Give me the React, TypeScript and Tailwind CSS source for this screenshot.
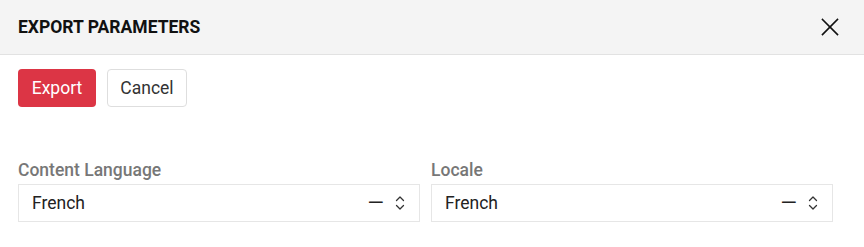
import React from 'react';

// Export parameters dialog: header, action buttons and two select fields

function UpDownIcon() {
  return (
    <svg width="10" height="16" viewBox="0 0 10 16" fill="none" stroke="#333" strokeWidth="1.3" strokeLinecap="round" strokeLinejoin="round">
      <path d="M1.5 5.5 L5 2 L8.5 5.5" />
      <path d="M1.5 10.5 L5 14 L8.5 10.5" />
    </svg>
  );
}

function SelectField({ label, value }: { label: string; value: string }) {
  return (
    <div className="flex flex-col">
      <label className="text-[17.5px] leading-[20px] font-medium text-[#777] mb-[4px]">{label}</label>
      <div className="h-[38px] border border-[#e6e6e6] bg-white flex items-center pl-[13px] pr-[14px]">
        <span className="flex-1 text-[17.5px] text-[#222]">{value}</span>
        <span className="text-[21px] text-[#222] mr-[11px] leading-none">—</span>
        <UpDownIcon />
      </div>
    </div>
  );
}

export default function App() {
  return (
    <div className="w-[864px] h-[247px] bg-white" style={{ fontFamily: 'Roboto, "Liberation Sans", sans-serif' }}>
      {/* Header */}
      <div className="h-[55px] bg-[#f4f4f4] border-b border-[#e2e2e2] flex items-center justify-between pl-[18px] pr-[25px]">
        <h2 className="text-[17.5px] font-bold text-[#111] uppercase">Export Parameters</h2>
        <button className="w-[18px] h-[18px] flex items-center justify-center" aria-label="Close">
          <svg width="18" height="18" viewBox="0 0 18 18" stroke="#111" strokeWidth="1.6" strokeLinecap="square">
            <path d="M1.5 1.5 L16.5 16.5" />
            <path d="M16.5 1.5 L1.5 16.5" />
          </svg>
        </button>
      </div>

      {/* Body */}
      <div className="px-[18px] pt-[14px]">
        <div className="flex gap-[11px]">
          <button className="h-[38px] w-[78px] rounded-[4px] bg-[#dc3545] text-white text-[17.5px]">Export</button>
          <button className="h-[38px] w-[80px] rounded-[4px] bg-white border border-[#dedede] text-[#333] text-[17.5px]">Cancel</button>
        </div>

        <div className="mt-[53px] grid grid-cols-2 gap-[11px] w-[815px]">
          <SelectField label="Content Language" value="French" />
          <SelectField label="Locale" value="French" />
        </div>
      </div>
    </div>
  );
}
